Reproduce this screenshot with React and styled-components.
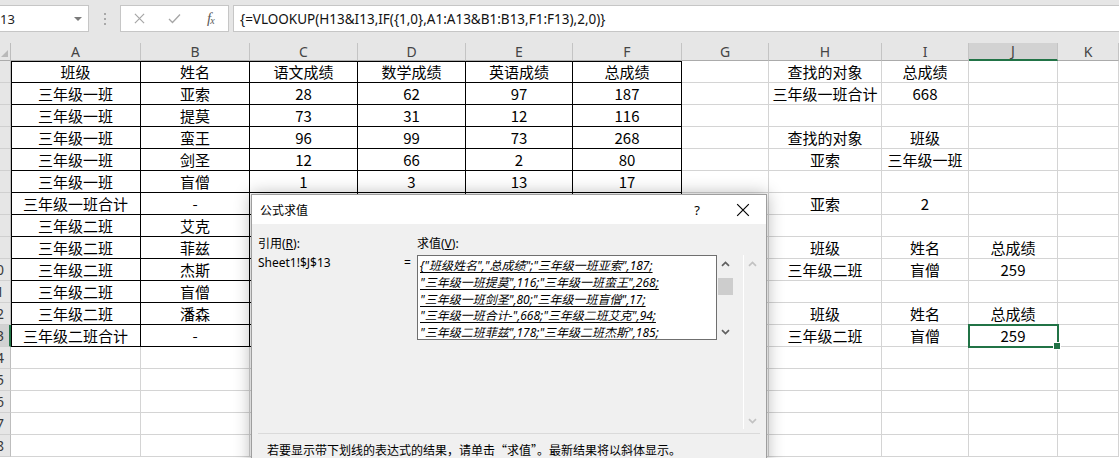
import React from 'react';
import styled, { createGlobalStyle } from 'styled-components';

const GREEN = '#217346';
const GRID = '#d4d4d4';
const HEAD_BG = '#e6e6e6';

const Global = createGlobalStyle`
  html, body { margin: 0; padding: 0; background: #fff; overflow: hidden; }
  body { font-family: "Noto Sans", "Noto Sans CJK SC", sans-serif; }
`;

const Page = styled.div`
  position: relative;
  width: 1119px;
  height: 458px;
  overflow: hidden;
  background: #fff;
`;

/* ---------- formula bar ---------- */
const FormulaBar = styled.div`
  height: 43px;
  box-sizing: border-box;
  padding-top: 5px;
  background: ${HEAD_BG};
  display: flex;
  align-items: flex-start;
`;

const Field = styled.div`
  height: 27px;
  box-sizing: border-box;
  background: #fff;
  border: 1px solid #c6c6c6;
  display: flex;
  align-items: center;
`;

const NameBox = styled(Field)`
  width: 89px;
  border-left: none;
  justify-content: space-between;
  padding-right: 6px;
  font-size: 13px;
  color: #222;
`;

const DropTri = styled.span`
  width: 0;
  height: 0;
  border-left: 4px solid transparent;
  border-right: 4px solid transparent;
  border-top: 4px solid #7a7a7a;
`;

const Grip = styled.div`
  width: 31px;
  height: 27px;
  display: flex;
  flex-direction: column;
  align-items: center;
  justify-content: center;
  gap: 3px;
`;

const GripDot = styled.span`
  width: 2px;
  height: 2px;
  background: #a8a8a8;
`;

const FxBox = styled(Field)`
  width: 109px;
  padding-left: 1px;
`;

const FxSlot = styled.div`
  width: 36px;
  display: flex;
  align-items: center;
  justify-content: center;
  color: ${p => p.$color || '#9a9a9a'};
`;

const FxText = styled.span`
  font-family: "Liberation Serif", serif;
  font-style: italic;
  font-size: 15px;
  color: #5a5a5a;
  letter-spacing: -1px;
`;

const FxSub = styled.span`
  font-size: 10px;
  vertical-align: -1px;
`;

const FormulaInput = styled(Field)`
  flex: 1;
  margin-left: 4px;
  border-right: none;
  padding-left: 6px;
  font-size: 13.5px;
  color: #111;
  white-space: nowrap;
`;

/* ---------- sheet ---------- */
const Sheet = styled.div`
  display: grid;
  grid-template-columns: 11px 130px 109px 108px 108px 107px 109px 87px 113px 87px 89px 61px;
  grid-template-rows: 18px repeat(18, 22px);
`;

const Corner = styled.div`
  background: ${HEAD_BG};
  border-right: 1px solid #bdbdbd;
  border-bottom: 1px solid #ababab;
  box-sizing: border-box;
  display: flex;
  align-items: flex-end;
  justify-content: flex-end;
  padding: 0 2px 3px 0;
`;

const CornerTri = styled.span`
  width: 0;
  height: 0;
  border-left: 7px solid transparent;
  border-bottom: 7px solid #b9b9b9;
`;

const ColHead = styled.div`
  box-sizing: border-box;
  background: ${p => (p.$active ? '#d2d2d2' : HEAD_BG)};
  border-right: 1px solid #c4c4c4;
  border-bottom: ${p => (p.$active ? `2px solid ${GREEN}` : '1px solid #ababab')};
  display: flex;
  align-items: center;
  justify-content: center;
  font-family: "Noto Sans", sans-serif;
  font-size: 14px;
  line-height: 1;
  color: #444;
`;

const RowHead = styled.div`
  box-sizing: border-box;
  background: ${p => (p.$active ? '#d2d2d2' : HEAD_BG)};
  border-right: ${p => (p.$active ? `2px solid ${GREEN}` : '1px solid #bdbdbd')};
  border-bottom: 1px solid #d0d0d0;
  overflow: hidden;
  display: flex;
  align-items: center;
`;

const RowNum = styled.span`
  flex: none;
  width: 30px;
  margin-left: -19px;
  text-align: center;
  font-family: "Noto Sans", sans-serif;
  font-size: 14px;
  line-height: 1;
  color: #3a3a3a;
`;

const Cell = styled.div`
  position: relative;
  box-sizing: border-box;
  border-right: 1px solid ${p => (p.$box ? '#000' : GRID)};
  border-bottom: 1px solid ${p => (p.$box ? '#000' : GRID)};
  box-shadow: ${p => p.$shadow || 'none'};
  display: flex;
  align-items: center;
  justify-content: center;
  font-family: "Noto Sans CJK SC", sans-serif;
  font-size: 15px;
  line-height: 1;
  color: #000;
  white-space: nowrap;
  ${p =>
    p.$selected &&
    `
    outline: 2px solid ${GREEN};
    outline-offset: -1px;
    z-index: 1;
  `}
`;

const FillHandle = styled.span`
  position: absolute;
  right: -4px;
  bottom: -4px;
  width: 6px;
  height: 6px;
  background: ${GREEN};
  border: 1px solid #fff;
  box-sizing: content-box;
`;

/* ---------- dialog ---------- */
const Dialog = styled.div`
  position: absolute;
  left: 251px;
  top: 194px;
  width: 516px;
  height: 290px;
  box-sizing: border-box;
  border: 1px solid #9e9e9e;
  background: #f0f0f0;
  box-shadow: 0 0 16px rgba(0, 0, 0, 0.3);
  font-family: "Noto Sans", "Noto Sans CJK SC", sans-serif;
  font-size: 12px;
  color: #000;
`;

const TitleBar = styled.div`
  height: 29px;
  background: #fff;
  display: flex;
  align-items: center;
  padding-left: 8px;
`;

const Title = styled.div`
  flex: 1;
  font-family: "Noto Sans CJK SC", sans-serif;
  font-size: 12px;
  line-height: 16px;
`;

const TitleBtn = styled.div`
  width: 46px;
  height: 29px;
  display: flex;
  align-items: center;
  justify-content: center;
  font-size: 13px;
`;

const Body = styled.div`
  padding: 9px 6px 0 6px;
`;

const FormGrid = styled.div`
  display: grid;
  grid-template-columns: 146px 13px 300px 17px 9px 17px;
  grid-template-rows: 22px 174px;
`;

const Label = styled.div`
  display: flex;
  align-items: center;
  line-height: 16px;
  grid-column: ${p => p.$col};
`;

const Plain = styled.div`
  line-height: 16px;
  grid-column: ${p => p.$col};
`;

const ValueBox = styled.div`
  grid-column: 3;
  height: 85px;
  box-sizing: border-box;
  border: 1px solid #6f6f6f;
  background: #fff;
  padding: 2px 2px 0 2px;
  overflow: hidden;
`;

const ValueLine = styled.div`
  font-family: "Noto Sans", "Noto Sans CJK SC", sans-serif;
  font-style: italic;
  text-decoration: underline;
  text-underline-offset: 2px;
  font-size: 12px;
  line-height: 16.8px;
  white-space: nowrap;
`;

const ScrollBar = styled.div`
  grid-column: ${p => p.$col};
  height: ${p => p.$h}px;
  box-sizing: border-box;
  display: flex;
  flex-direction: column;
  align-items: center;
  border-left: ${p => (p.$disabled ? '1px solid #fff' : 'none')};
`;

const ArrowBox = styled.div`
  height: 17px;
  width: 100%;
  display: flex;
  align-items: center;
  justify-content: center;
  color: ${p => (p.$disabled ? '#c2c2c2' : '#606060')};
`;

const Thumb = styled.div`
  margin-top: 6px;
  width: 15px;
  height: 17px;
  background: #cdcdcd;
`;

const Spacer = styled.div`
  flex: 1;
`;

const Separator = styled.div`
  margin-top: 4px;
  border-top: 1px solid #dadada;
`;

const Hint = styled.div`
  padding: 8px 0 0 9px;
  font-family: "Noto Sans CJK SC", sans-serif;
  font-size: 12px;
  line-height: 16px;
  white-space: nowrap;
`;

const Chevron = ({ down }) => (
  <svg width="9" height="6" viewBox="0 0 9 6">
    <path
      d={down ? 'M1 1.2 L4.5 4.6 L8 1.2' : 'M1 4.8 L4.5 1.4 L8 4.8'}
      fill="none"
      stroke="currentColor"
      strokeWidth="1.7"
    />
  </svg>
);

const XIcon = ({ size = 11, w = 1.2 }) => (
  <svg width={size} height={size} viewBox="0 0 12 12">
    <path d="M1 1 L11 11 M11 1 L1 11" stroke="currentColor" strokeWidth={w} fill="none" />
  </svg>
);

const CheckIcon = () => (
  <svg width="13" height="11" viewBox="0 0 13 11">
    <path d="M1 6 L4.5 9.5 L12 1.5" stroke="currentColor" strokeWidth="1.3" fill="none" />
  </svg>
);

const COLS = ['A', 'B', 'C', 'D', 'E', 'F', 'G', 'H', 'I', 'J', 'K'];

const DATA = [
  ['班级', '姓名', '语文成绩', '数学成绩', '英语成绩', '总成绩', '', '查找的对象', '总成绩', '', ''],
  ['三年级一班', '亚索', '28', '62', '97', '187', '', '三年级一班合计', '668', '', ''],
  ['三年级一班', '提莫', '73', '31', '12', '116', '', '', '', '', ''],
  ['三年级一班', '蛮王', '96', '99', '73', '268', '', '查找的对象', '班级', '', ''],
  ['三年级一班', '剑圣', '12', '66', '2', '80', '', '亚索', '三年级一班', '', ''],
  ['三年级一班', '盲僧', '1', '3', '13', '17', '', '', '', '', ''],
  ['三年级一班合计', '-', '210', '261', '197', '668', '', '亚索', '2', '', ''],
  ['三年级二班', '艾克', '30', '32', '32', '94', '', '', '', '', ''],
  ['三年级二班', '菲兹', '60', '58', '60', '178', '', '班级', '姓名', '总成绩', ''],
  ['三年级二班', '杰斯', '61', '62', '62', '185', '', '三年级二班', '盲僧', '259', ''],
  ['三年级二班', '盲僧', '90', '80', '89', '259', '', '', '', '', ''],
  ['三年级二班', '潘森', '55', '50', '45', '150', '', '班级', '姓名', '总成绩', ''],
  ['三年级二班合计', '-', '296', '282', '288', '866', '', '三年级二班', '盲僧', '259', ''],
];

const ROWS = Array.from({ length: 18 }, (_, i) => DATA[i] || Array(11).fill(''));

const ACTIVE_ROW = 13;
const ACTIVE_COL = 9;

const VALUE_LINES = [
  '{"班级姓名","总成绩";"三年级一班亚索",187;',
  '"三年级一班提莫",116;"三年级一班蛮王",268;',
  '"三年级一班剑圣",80;"三年级一班盲僧",17;',
  '"三年级一班合计-",668;"三年级二班艾克",94;',
  '"三年级二班菲兹",178;"三年级二班杰斯",185;',
  '"三年级二班盲僧",259;"三年级二班潘森",150;',
];

function cellShadow(r, c) {
  const parts = [];
  if (c === 0) parts.push('inset 1px 0 0 #000');
  if (r === 1) parts.push('inset 0 1px 0 #000');
  return parts.length ? parts.join(', ') : undefined;
}

export default function App() {
  return (
    <Page>
      <Global />
      <FormulaBar>
        <NameBox>
          <span>13</span>
          <DropTri />
        </NameBox>
        <Grip>
          <GripDot />
          <GripDot />
          <GripDot />
        </Grip>
        <FxBox>
          <FxSlot $color="#a6a6a6">
            <XIcon size={11} w={1.3} />
          </FxSlot>
          <FxSlot $color="#a6a6a6">
            <CheckIcon />
          </FxSlot>
          <FxSlot>
            <FxText>
              f<FxSub>x</FxSub>
            </FxText>
          </FxSlot>
        </FxBox>
        <FormulaInput>{'{=VLOOKUP(H13&I13,IF({1,0},A1:A13&B1:B13,F1:F13),2,0)}'}</FormulaInput>
      </FormulaBar>

      <Sheet>
        <Corner>
          <CornerTri />
        </Corner>
        {COLS.map((c, i) => (
          <ColHead key={c} $active={i === ACTIVE_COL}>
            {c}
          </ColHead>
        ))}
        {ROWS.map((row, ri) => {
          const r = ri + 1;
          return (
            <React.Fragment key={r}>
              <RowHead $active={r === ACTIVE_ROW}>
                <RowNum>{r}</RowNum>
              </RowHead>
              {row.map((v, ci) => {
                const box = r <= 13 && ci <= 5;
                const selected = r === ACTIVE_ROW && ci === ACTIVE_COL;
                return (
                  <Cell
                    key={ci}
                    $box={box}
                    $shadow={box ? cellShadow(r, ci) : undefined}
                    $selected={selected}
                  >
                    {v}
                    {selected && <FillHandle />}
                  </Cell>
                );
              })}
            </React.Fragment>
          );
        })}
      </Sheet>

      <Dialog>
        <TitleBar>
          <Title>公式求值</Title>
          <TitleBtn>?</TitleBtn>
          <TitleBtn>
            <XIcon size={14} w={1} />
          </TitleBtn>
        </TitleBar>
        <Body>
          <FormGrid>
            <Label $col={1}>
              引用(<u>R</u>):
            </Label>
            <Label $col={3}>
              求值(<u>V</u>):
            </Label>
            <Plain $col={1}>Sheet1!$J$13</Plain>
            <Plain $col={2}>=</Plain>
            <ValueBox>
              {VALUE_LINES.map(l => (
                <ValueLine key={l}>{l}</ValueLine>
              ))}
            </ValueBox>
            <ScrollBar $col={4} $h={85}>
              <ArrowBox>
                <Chevron />
              </ArrowBox>
              <Thumb />
              <Spacer />
              <ArrowBox>
                <Chevron down />
              </ArrowBox>
            </ScrollBar>
            <ScrollBar $col={6} $h={174} $disabled>
              <ArrowBox $disabled>
                <Chevron />
              </ArrowBox>
              <Spacer />
              <ArrowBox $disabled>
                <Chevron down />
              </ArrowBox>
            </ScrollBar>
          </FormGrid>
          <Separator />
          <Hint>若要显示带下划线的表达式的结果，请单击“求值”。最新结果将以斜体显示。</Hint>
        </Body>
      </Dialog>
    </Page>
  );
}
